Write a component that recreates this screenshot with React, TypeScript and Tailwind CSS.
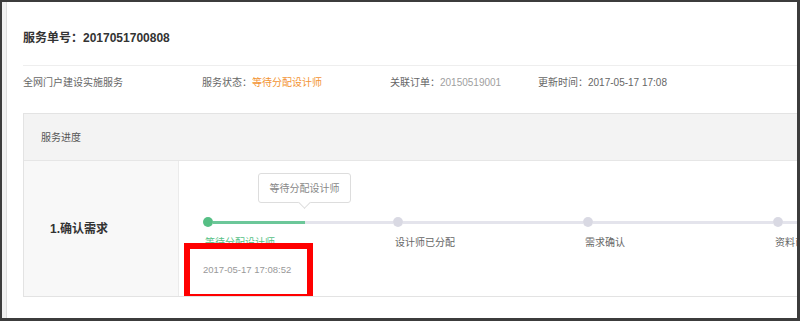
import React from 'react';

const steps = ['等待分配设计师', '设计师已分配', '需求确认', '资料已提交'];

const font = { fontFamily: '"Liberation Sans", "Noto Sans CJK SC", sans-serif' };

export default function App() {
  return (
    <div className="w-[800px] h-[321px] bg-[#3c3c3c] pt-[2px] pl-[2px] pr-[3px] pb-[3px] flex" style={font}>
      <div className="w-[4px] bg-[#f1f1f1]" />
      <div className="flex-1 bg-white border-l border-[#dedede] pl-[16px] overflow-hidden">
        {/* title */}
        <div className="pt-[27px] pb-[18px] border-b border-[#eeeeee]">
          <h1 className="text-[12px] leading-[18px] font-bold text-[#333]">服务单号：2017051700808</h1>
        </div>

        {/* info row */}
        <div className="mt-[10px] flex text-[10px] leading-[14px] text-[#666] whitespace-nowrap">
          <div className="w-[179px]">全网门户建设实施服务</div>
          <div className="w-[188px]">
            服务状态：<span className="text-[#f39433]">等待分配设计师</span>
          </div>
          <div className="w-[148px]">
            关联订单：<span className="text-[#a0a0a0]">20150519001</span>
          </div>
          <div>更新时间：2017-05-17 17:08</div>
        </div>

        {/* progress box */}
        <div className="mt-[23px] border-t border-b border-l border-[#e3e3e3]">
          <div className="h-[47px] bg-[#f3f3f3] border-b border-[#e6e6e6] flex items-center pl-[17px] text-[10px] text-[#555]">
            服务进度
          </div>
          <div className="flex h-[135px]">
            <div className="w-[155px] bg-[#f8f8f8] border-r border-[#ebebeb] pl-[26px] pt-[55px]">
              <span className="text-[12px] leading-[16px] font-bold text-[#333]">1.确认需求</span>
            </div>
            <div className="relative flex-1 pt-[12px] pl-[24px] overflow-hidden">
              {/* tooltip */}
              <div className="relative ml-[55px] w-[93px] h-[30px] border border-[#dddddd] rounded-[3px] bg-white flex items-center justify-center text-[10px] text-[#888]">
                等待分配设计师
                <span className="absolute left-1/2 -bottom-[5px] -ml-[5px] w-[9px] h-[9px] bg-white border-r border-b border-[#dddddd] rotate-45" />
              </div>

              {/* timeline */}
              <div className="mt-[14px] flex w-[800px]">
                {steps.map((s, i) => (
                  <div key={s} className="w-[190px] shrink-0 flex items-center">
                    <span className={`w-[10px] h-[10px] rounded-full shrink-0 ${i === 0 ? 'bg-[#56bf85]' : 'bg-[#d9d9e3]'}`} />
                    <div className="flex-1 h-[3px] bg-[#e4e4ec] flex">
                      {i === 0 && <div className="w-[92px] h-full bg-[#6cc799]" />}
                    </div>
                  </div>
                ))}
              </div>

              <div className="mt-[9px] flex w-[800px] text-[10px] leading-[14px] ml-[2px]">
                {steps.map((s, i) => (
                  <div key={s} className={`w-[190px] shrink-0 ${i === 0 ? 'text-[#56bf85]' : 'text-[#666]'}`}>
                    {s}
                  </div>
                ))}
              </div>

              <div className="mt-[13px] text-[9.5px] leading-[14px] text-[#999]">2017-05-17 17:08:52</div>

              {/* highlight */}
              <div className="absolute left-[5px] top-[82px] w-[129px] h-[57px] border-[6px] border-[#ff0000]" />
            </div>
          </div>
        </div>
      </div>
    </div>
  );
}
